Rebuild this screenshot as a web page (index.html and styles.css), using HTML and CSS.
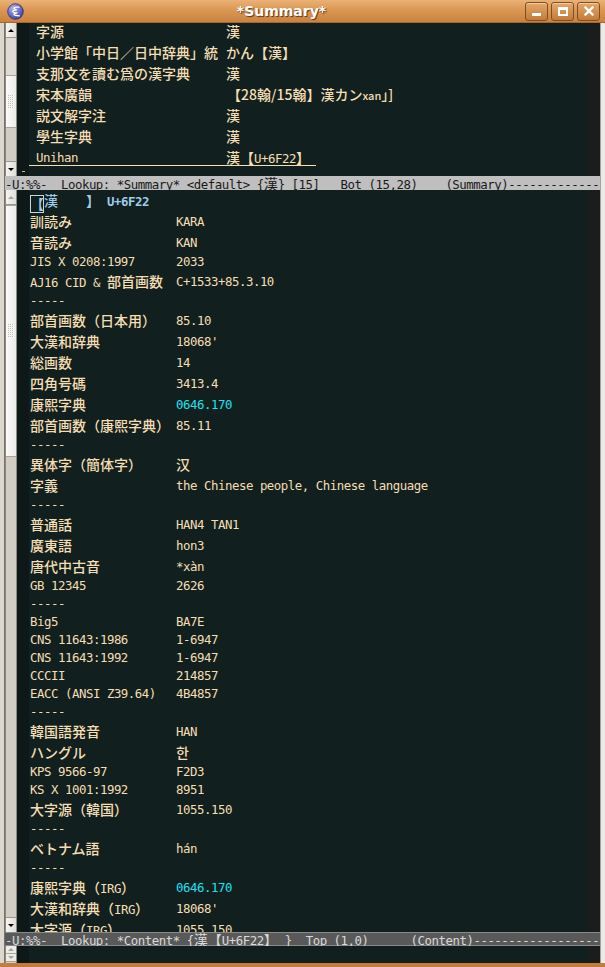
FILE: index.html
```html
<!DOCTYPE html>
<html>
<head>
<meta charset="utf-8">
<title>*Summary*</title>
<link rel="stylesheet" href="styles.css">
</head>
<body>
<div class="win">
  <div class="titlebar">
    <div class="ticon">
      <svg width="17" height="17" viewBox="0 0 17 17">
        <defs>
          <radialGradient id="eg" cx="0.35" cy="0.3" r="0.8">
            <stop offset="0" stop-color="#b4b4f0"/>
            <stop offset="0.6" stop-color="#6767c8"/>
            <stop offset="1" stop-color="#3b3b92"/>
          </radialGradient>
        </defs>
        <circle cx="8.5" cy="8.5" r="7.8" fill="url(#eg)" stroke="#2d2d6e" stroke-width="0.8"/>
        <path d="M12 4.2 C7 3.6 4.8 5.6 9.6 6.8 C4.6 7.4 4.2 9.6 10.4 9.8 C5.4 10.6 5.6 12.6 12.4 12.8" fill="none" stroke="#fff" stroke-width="1.3" stroke-linecap="round"/>
      </svg>
    </div>
    <div class="ttl">*Summary*</div>
    <div class="tbtns">
      <div class="tb"><span class="i-min"></span></div>
      <div class="tb"><span class="i-max"></span></div>
      <div class="tb">
        <svg width="10" height="10" viewBox="0 0 10 10"><path d="M1.5 1.5 L8.5 8.5 M8.5 1.5 L1.5 8.5" stroke="#fff" stroke-width="2.4" stroke-linecap="square"/></svg>
      </div>
    </div>
  </div>

  <div class="frame">
    <div class="pane top">
      <div class="sb">
        <div class="btn up"></div>
        <div class="trough tr-a"></div>
        <div class="thumb th-top"><i class="grip"></i></div>
        <div class="trough"></div>
        <div class="btn dn"></div>
      </div>
      <div class="fringe fr-top"><i class="eob"></i></div>
      <div class="text ttext">
        <div class="trow"><span class="j">字源</span><span class="j">漢</span></div>
        <div class="trow"><span class="j">小学館「中日／日中辞典」統</span><span class="j">かん【漢】</span></div>
        <div class="trow"><span class="j">支那文を讀む爲の漢字典</span><span class="j">漢</span></div>
        <div class="trow"><span class="j">宋本廣韻</span><span class="j sv">【28翰/15翰】漢カン<span class="sm">xan</span>」]</span></div>
        <div class="trow"><span class="j">説文解字注</span><span class="j">漢</span></div>
        <div class="trow"><span class="j">學生字典</span><span class="j">漢</span></div>
        <div class="trow ul"><span>Unihan</span><span><span class="j">漢【</span>U+6F22<span class="j">】</span></span></div>
      </div>
      <div class="rf"></div>
    </div>

    <div class="ml ml1"><span>-U:%%-  Lookup: *Summary* &lt;default&gt; {</span><span class="j">漢</span><span>} [15]   Bot (15,28)    (Summary)--------------------------------------------------</span></div>

    <div class="pane bot">
      <div class="sb">
        <div class="btn up dis"></div>
        <div class="thumb th-bot"><i class="grip"></i></div>
        <div class="trough"></div>
        <div class="btn dn"></div>
      </div>
      <div class="fringe"></div>
      <div class="text btext">
        <div class="r hd"><span class="full"><span class="j cur">【</span><span class="j">漢</span>    <span class="j">】</span> U+6F22</span></div>
        <div class="r"><span class="j">訓読み</span><span>KARA</span></div>
        <div class="r"><span class="j">音読み</span><span>KAN</span></div>
        <div class="a"><span>JIS X 0208:1997</span><span>2033</span></div>
        <div class="r"><span>AJ16 CID &amp; <span class="j">部首画数</span></span><span>C+1533+85.3.10</span></div>
        <div class="a"><span>-----</span></div>
        <div class="r"><span class="j">部首画数（日本用）</span><span>85.10</span></div>
        <div class="r"><span class="j">大漢和辞典</span><span>18068'</span></div>
        <div class="r"><span class="j">総画数</span><span>14</span></div>
        <div class="r"><span class="j">四角号碼</span><span>3413.4</span></div>
        <div class="r"><span class="j">康熙字典</span><span class="cy">0646.170</span></div>
        <div class="r"><span class="j">部首画数（康熙字典）</span><span>85.11</span></div>
        <div class="a"><span>-----</span></div>
        <div class="r"><span class="j">異体字（簡体字）</span><span class="j">汉</span></div>
        <div class="r"><span class="j">字義</span><span>the Chinese people, Chinese language</span></div>
        <div class="a"><span>-----</span></div>
        <div class="r"><span class="j">普通話</span><span>HAN4 TAN1</span></div>
        <div class="r"><span class="j">廣東語</span><span>hon3</span></div>
        <div class="r"><span class="j">唐代中古音</span><span>*xàn</span></div>
        <div class="a"><span>GB 12345</span><span>2626</span></div>
        <div class="a"><span>-----</span></div>
        <div class="a"><span>Big5</span><span>BA7E</span></div>
        <div class="a"><span>CNS 11643:1986</span><span>1-6947</span></div>
        <div class="a"><span>CNS 11643:1992</span><span>1-6947</span></div>
        <div class="a"><span>CCCII</span><span>214857</span></div>
        <div class="a"><span>EACC (ANSI Z39.64)</span><span>4B4857</span></div>
        <div class="a"><span>-----</span></div>
        <div class="r"><span class="j">韓国語発音</span><span>HAN</span></div>
        <div class="r"><span class="j">ハングル</span><span class="j">한</span></div>
        <div class="a"><span>KPS 9566-97</span><span>F2D3</span></div>
        <div class="a"><span>KS X 1001:1992</span><span>8951</span></div>
        <div class="r"><span class="j">大字源（韓国）</span><span>1055.150</span></div>
        <div class="a"><span>-----</span></div>
        <div class="r"><span class="j">ベトナム語</span><span>hán</span></div>
        <div class="a"><span>-----</span></div>
        <div class="r"><span><span class="j">康熙字典（</span>IRG<span class="j">）</span></span><span class="cy">0646.170</span></div>
        <div class="r"><span><span class="j">大漢和辞典（</span>IRG<span class="j">）</span></span><span>18068'</span></div>
        <div class="r"><span><span class="j">大字源（</span>IRG<span class="j">）</span></span><span>1055.150</span></div>
      </div>
      <div class="rf"></div>
    </div>

    <div class="ml ml2"><span>-U:%%-  Lookup: *Content* {</span><span class="j">漢【</span><span>U+6F22</span><span class="j">】</span><span> }  Top (1,0)      (Content)--------------------------------------------------</span></div>

    <div class="pane mini">
      <div class="sb sbm">
        <div class="mbtn up"></div>
        <div class="mbtn dn"></div>
      </div>
      <div class="fringe"></div>
      <div class="text"></div>
      <div class="rf"></div>
    </div>
  </div>
</div>
</body>
</html>
```

FILE: styles.css
```css
* { box-sizing: border-box; }
html, body { margin: 0; padding: 0; }
body {
  width: 605px;
  height: 967px;
  overflow: hidden;
  background: #c47c3b;
  font-family: "DejaVu Sans Mono", monospace;
  font-size: 12.4px;
  letter-spacing: -0.47px;
}
.win { height: 967px; display: flex; flex-direction: column; }

/* title bar */
.titlebar {
  height: 23px;
  flex: none;
  display: flex;
  align-items: center;
  letter-spacing: 0;
  background: linear-gradient(#eab175 0%, #dc9754 45%, #c98341 100%);
  border-bottom: 1px solid #a9652c;
}
.ticon { width: 26px; padding-left: 7px; display: flex; align-items: center; }
.ttl {
  flex: 1;
  text-align: center;
  padding-left: 12px;
  color: #fff;
  font: bold 14px "DejaVu Sans", sans-serif;
  text-shadow: 1px 1px 1px #5a3412;
}
.tbtns { display: flex; gap: 3px; padding-right: 5px; }
.tb {
  width: 23px;
  height: 19px;
  border: 1px solid #7e4d22;
  border-radius: 3px;
  background: linear-gradient(#e3a86b, #c47b39);
  box-shadow: inset 0 1px 0 rgba(255,255,255,.45);
  display: flex;
  align-items: center;
  justify-content: center;
}
.i-min { width: 9px; height: 3px; background: #fff; margin-top: 7px; }
.i-max { width: 10px; height: 9px; border: 2px solid #fff; border-top-width: 3px; }

/* window frame */
.frame {
  flex: 1;
  min-height: 0;
  display: flex;
  flex-direction: column;
  padding: 0 5px;
  border-bottom: 4px solid #c47c3b;
  background:
    linear-gradient(to right, #dcd8d0 0 4px, #77736b 4px 5px, transparent 5px calc(100% - 5px), #a4a09a calc(100% - 5px) calc(100% - 4px), #ecebe7 calc(100% - 4px)),
    #11201f;
}

.pane { display: flex; flex: none; overflow: hidden; }
.top { height: 153px; }
.bot { height: 742px; }
.mini { height: 17px; }

.sb {
  width: 12px;
  flex: none;
  display: flex;
  flex-direction: column;
  background: #d3cfc7;
  border-left: 1px solid #8e897f;
  border-right: 1px solid #8e897f;
}
.fringe { width: 12px; flex: none; background: #0f1819; }
.text { flex: 1; min-width: 0; overflow: hidden; color: #f5deb3; }
.rf { width: 12px; flex: none; background: #1b1d1d; }

/* scrollbar parts */
.btn {
  height: 15px;
  flex: none;
  background: linear-gradient(to right, #f6f5f3, #e1ded9);
  border-bottom: 1px solid #9b968c;
  display: flex;
  align-items: center;
  justify-content: center;
}
.btn.dn { border-bottom: none; border-top: 1px solid #9b968c; }
.btn.up::before, .mbtn.up::before {
  content: "";
  border-left: 3px solid transparent;
  border-right: 3px solid transparent;
  border-bottom: 3px solid #000;
}
.btn.dn::before, .mbtn.dn::before {
  content: "";
  border-left: 3px solid transparent;
  border-right: 3px solid transparent;
  border-top: 3px solid #000;
}
.btn.dis::before { border-bottom-color: #aaa49a; }
.trough { flex: 1; background: #d1ccc4; }
.tr-a { flex: none; height: 37px; background: #dedad4; }
.thumb {
  flex: none;
  background: linear-gradient(to right, #fafaf9, #ecebe8);
  border-top: 1px solid #aaa59c;
  border-bottom: 1px solid #aaa59c;
  display: flex;
  align-items: center;
  justify-content: center;
}
.th-top { height: 53px; }
.th-bot { height: 252px; }
.grip {
  width: 6px;
  height: 14px;
  background:
    linear-gradient(90deg, transparent 1px, #f6f5f3 1px) 0 0 / 2px 2px,
    linear-gradient(transparent 1px, #f6f5f3 1px) 0 0 / 2px 2px,
    #c4beb4;
}
.sbm { background: #d3cfc7; }
.mbtn {
  height: 8px;
  flex: none;
  background: #eeece9;
  border-bottom: 1px solid #aaa49a;
  display: flex;
  align-items: center;
  justify-content: center;
}
.mbtn.up::before { border-bottom-color: #a8a298; }
.mbtn.dn::before { border-top-color: #a8a298; }

/* fringe end-of-buffer mark */
.fr-top { padding-top: 148px; }
.eob { display: block; width: 3px; height: 1px; margin-left: 5px; background: #e7b26a; }

/* text */
.j {
  font-family: "Noto Sans CJK JP", "Noto Sans CJK KR", sans-serif;
  font-size: 14px;
  font-weight: 500;
  letter-spacing: 0;
}
.sm { font-size: 11px; }
.ttext { margin-top: -2px; }
.trow {
  display: grid;
  grid-template-columns: 190px auto;
  padding-left: 7px;
  height: 21px;
  line-height: 21px;
  white-space: pre;
}
.trow.ul {
  width: 287px;
  background: linear-gradient(#f5deb3, #f5deb3) 0 18px / 100% 1px no-repeat;
}
.sv { margin-left: 1px; }

.btext { padding-left: 1px; }
.r, .a {
  display: grid;
  grid-template-columns: 146px auto;
  white-space: pre;
}
.r { height: 21px; line-height: 21px; }
.a { height: 18px; line-height: 18px; }
.full { grid-column: 1 / -1; }
.hd { color: #9fcdea; font-weight: bold; }
.hd .j { font-weight: 500; }
.cur { outline: 1px solid #c9d6da; outline-offset: -1px; display: inline-block; line-height: 17px; height: 18px; vertical-align: -3px; }
.cy { color: #1fe0ef; }

/* mode lines */
.ml {
  height: 14px;
  line-height: 14px;
  flex: none;
  white-space: pre;
  overflow: hidden;
}
.ml .j { line-height: 14px; font-weight: 400; }
.ml1 { background: #bfbfbf; color: #1a1a1a; }
.ml2 {
  background: #595959;
  color: #d9d9d9;
  box-shadow: inset 0 1px 0 #8a8a8a, inset 0 -1px 0 #8a8a8a;
}
```
